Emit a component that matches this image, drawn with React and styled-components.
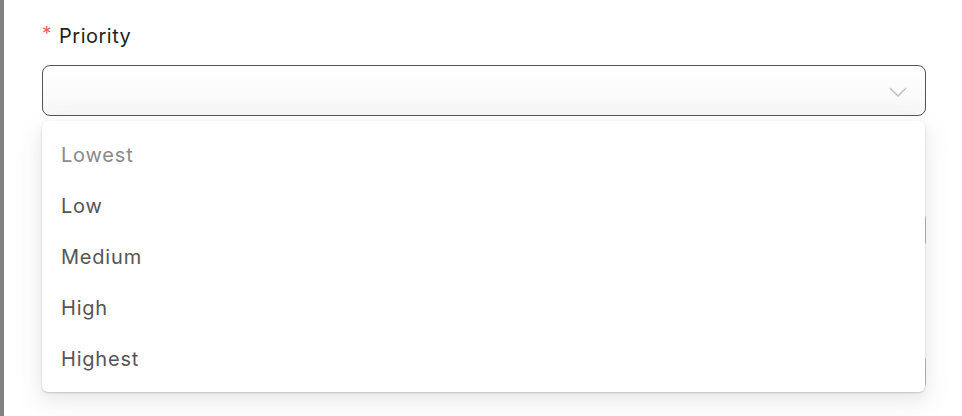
import React from 'react';
import styled, { createGlobalStyle } from 'styled-components';

const GlobalStyle = createGlobalStyle`
  html, body {
    margin: 0;
    padding: 0;
    background: #fff;
    font-family: Inter, "Noto Sans", "Liberation Sans", sans-serif;
  }
`;

const OPTIONS = ['Lowest', 'Low', 'Medium', 'High', 'Highest'];

export default function App() {
  return (
    <Page>
      <GlobalStyle />
      <Form>
        <Field>
          <Label>
            <Required>*</Required> Priority
          </Label>
          <SelectWrap>
            <SelectBox>
              <Chevron width="18" height="10" viewBox="0 0 18 10">
                <polyline points="1,1 9,9 17,1" />
              </Chevron>
            </SelectBox>
            <Menu>
              {OPTIONS.map((opt, i) => (
                <Option key={opt} muted={i === 0}>
                  {opt}
                </Option>
              ))}
            </Menu>
          </SelectWrap>
        </Field>

        {/* fields under the open menu, only their edges show */}
        <Input offset="95px" />
        <Input offset="104px" />
      </Form>
    </Page>
  );
}

const Page = styled.main`
  min-height: 416px;
  border-left: 4px solid #808080;
  box-sizing: border-box;
  overflow: hidden;
  height: 416px;
`;

const Form = styled.form`
  display: flex;
  flex-direction: column;
  padding: 23px 36px 0 38px;
`;

const Field = styled.div`
  display: flex;
  flex-direction: column;
  gap: 16px;
`;

const Label = styled.label`
  display: flex;
  align-items: center;
  gap: 7px;
  font-size: 20px;
  line-height: 26px;
  color: #1f1f1f;
  letter-spacing: 0.5px;
`;

const Required = styled.span`
  color: #f25c5c;
  font-size: 19px;
  line-height: 1;
  margin-top: -5px;
`;

const SelectWrap = styled.div`
  position: relative;
`;

const SelectBox = styled.div`
  height: 51px;
  box-sizing: border-box;
  border: 1px solid #555;
  border-radius: 8px;
  background: linear-gradient(#ffffff, #f7f7f7);
  display: flex;
  align-items: center;
  justify-content: flex-end;
  padding-right: 18px;
`;

const Chevron = styled.svg`
  fill: none;
  stroke: #bdbdbd;
  stroke-width: 1.3;
  margin-top: 2px;
`;

const Menu = styled.ul`
  position: absolute;
  top: 56px;
  left: 0;
  right: 1px;
  z-index: 10;
  margin: 0;
  padding: 8px 0;
  list-style: none;
  background: #fff;
  border-radius: 6px;
  box-shadow: 0 1px 2px rgba(0, 0, 0, 0.18), 0 6px 16px rgba(0, 0, 0, 0.06),
    0 9px 28px 8px rgba(0, 0, 0, 0.04);
`;

const Option = styled.li`
  height: 51px;
  display: flex;
  align-items: center;
  padding: 0 19px;
  font-size: 20px;
  letter-spacing: 0.8px;
  color: ${(p) => (p.muted ? '#8a8a8a' : '#555')};
`;

const Input = styled.div`
  flex-shrink: 0;
  margin-top: ${(p) => p.offset};
  height: 38px;
  box-sizing: border-box;
  border: 1px solid #bbb;
  border-radius: 8px;
  background: #fff;
`;
